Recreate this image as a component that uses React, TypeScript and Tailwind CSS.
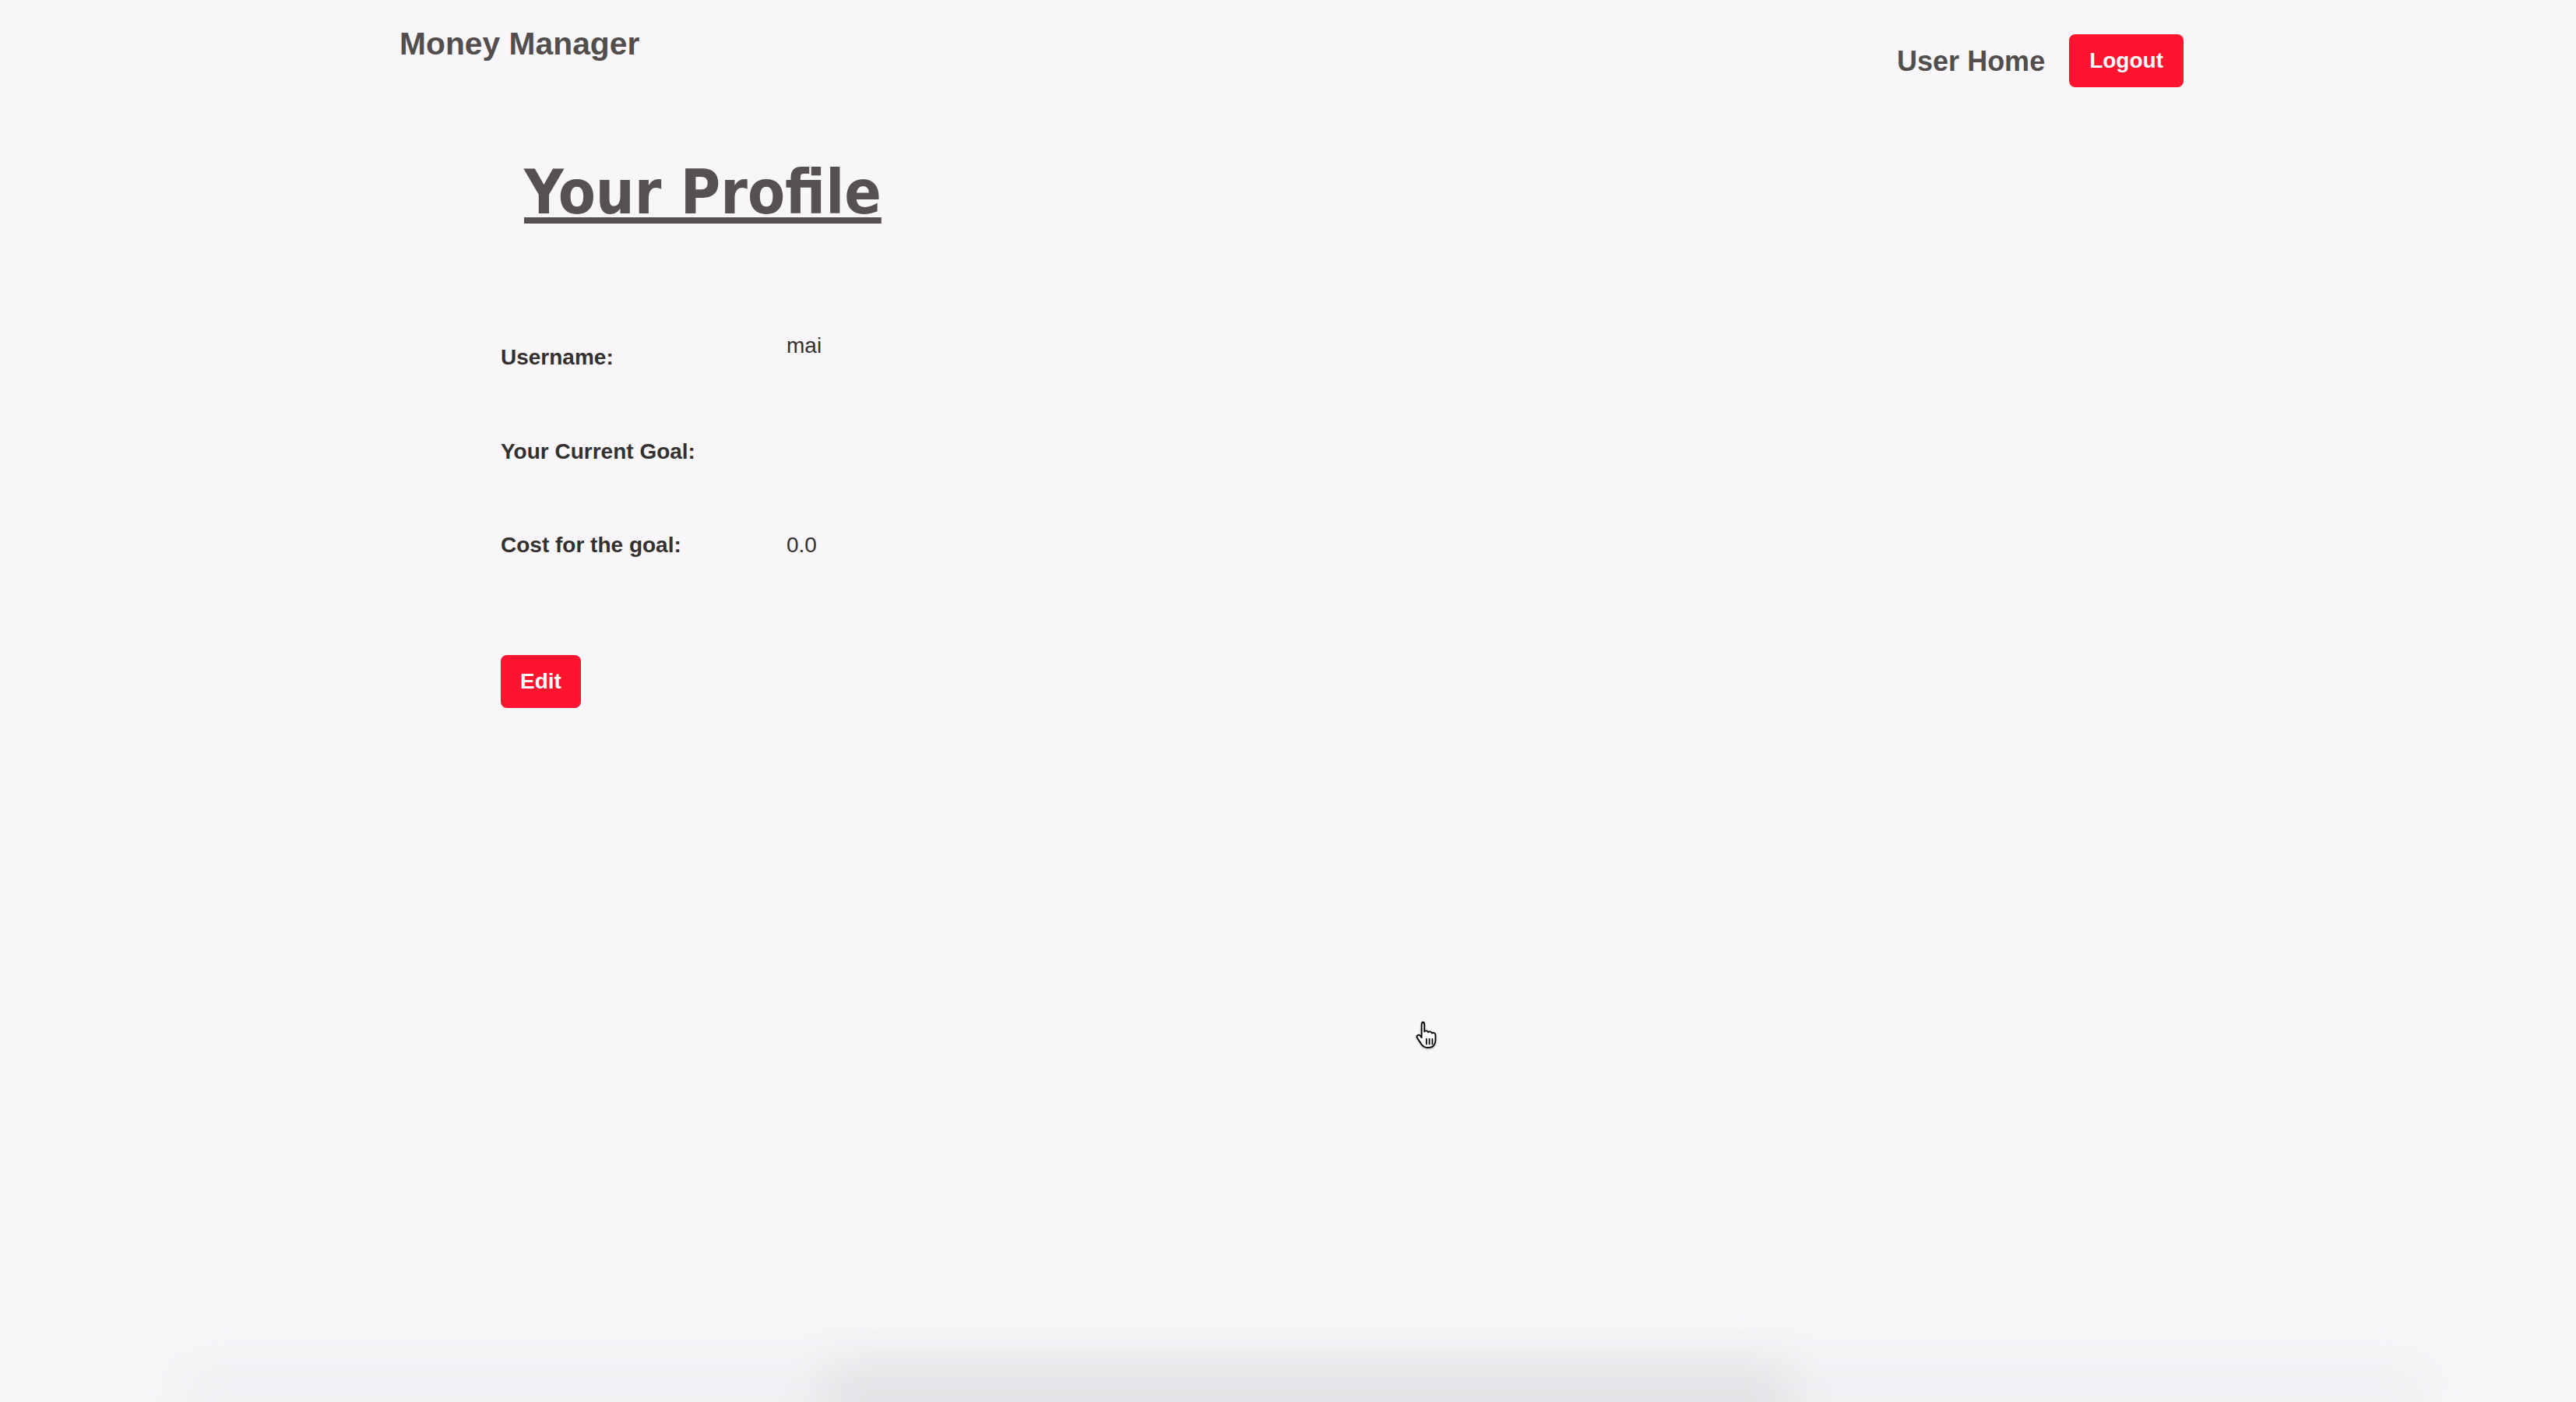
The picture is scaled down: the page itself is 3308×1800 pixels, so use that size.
import React from "react";

function HandCursor() {
  return (
    <svg width="34" height="38" viewBox="0 0 17 19" className="drop-shadow-[0_1px_1px_rgba(0,0,0,0.35)]">
      <path
        d="M5.2 1.2c.9 0 1.4.6 1.4 1.5v4.6c.3-.5.8-.7 1.3-.6.6.1 1 .5 1.1 1 .3-.4.8-.6 1.3-.5.6.1 1 .6 1.1 1.1.3-.3.7-.4 1.2-.3.8.2 1.1.9 1.1 1.7v3.1c0 2.2-1.4 4.6-4 4.6H8.2c-1.6 0-2.6-.8-3.5-2L2 11.3c-.4-.6-.3-1.3.2-1.7.6-.4 1.300-.2 1.7.3l.9 1.2V2.7c0-.9.5-1.5 1.4-1.5z"
        fill="#fff"
        stroke="#000"
        strokeWidth="0.9"
        strokeLinejoin="round"
      />
      <path d="M7.9 12v3.2M9.8 12v3.2M11.7 12v3.2" stroke="#000" strokeWidth="0.9" strokeLinecap="round" />
    </svg>
  );
}

export default function App() {
  return (
    <div
      className="relative min-h-[1800px] w-full overflow-hidden bg-[#f8f6f9] text-[#333130]"
      style={{ fontFamily: '"Liberation Sans", Arial, Helvetica, sans-serif' }}
    >
      <div className="mx-[513px]">
        <header className="flex items-start justify-between">
          <div className="pt-[32px] text-[40.8px] font-bold leading-[48px] text-[#524e4e]">Money Manager</div>
          <nav className="mr-[-9px] mt-[44px] flex items-center gap-[31px]">
            <a className="pt-[1px] text-[36px] font-bold leading-none text-[#524e4e]" href="#">
              User Home
            </a>
            <button className="h-[68px] rounded-[8px] bg-[#ff1430] px-[26px] text-[28px] font-bold leading-none text-white">
              Logout
            </button>
          </nav>
        </header>

        <main className="ml-[130px]">
          <h1
            className="mt-[96px] pl-[30px] text-[78px] font-bold leading-none text-[#555151] underline decoration-[8px] underline-offset-[5px]"
            style={{ fontFamily: '"DejaVu Sans Condensed", "DejaVu Sans", sans-serif' }}
          >
            Your Profile
          </h1>

          <div className="mt-[157px] flex flex-col gap-y-[88.5px] text-[28px] leading-[32px]">
            <div className="grid grid-cols-[367px_auto] items-start">
              <span className="font-bold">Username:</span>
              <span className="-mt-[15px]">mai</span>
            </div>
            <div className="grid grid-cols-[367px_auto] items-start">
              <span className="font-bold">Your Current Goal:</span>
              <span></span>
            </div>
            <div className="grid grid-cols-[367px_auto] items-start">
              <span className="font-bold">Cost for the goal:</span>
              <span>0.0</span>
            </div>
          </div>

          <button className="mt-[125px] h-[68px] rounded-[8px] bg-[#ff1430] px-[25px] text-[28px] font-bold leading-none text-white">
            Edit
          </button>
        </main>
      </div>

      <div className="pointer-events-none absolute left-[1816px] top-[1310px]">
        <HandCursor />
      </div>

      <div className="pointer-events-none absolute bottom-[-50px] left-[230px] right-[190px] h-[100px] bg-[#f0eff2] blur-[28px]" />
      <div className="pointer-events-none absolute bottom-[-50px] left-[1060px] right-[1010px] h-[100px] bg-[#e3e2e5] blur-[28px]" />
    </div>
  );
}
